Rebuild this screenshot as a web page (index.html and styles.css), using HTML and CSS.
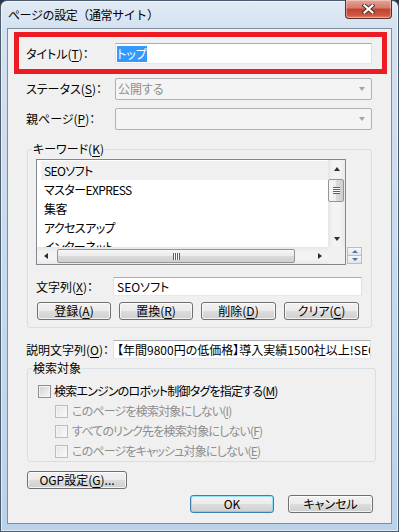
FILE: index.html
```html
<!DOCTYPE html>
<html lang="ja">
<head>
  <meta charset="UTF-8" />
  <meta name="viewport" content="width=device-width, initial-scale=1" />
  <title>ページの設定（通常サイト）</title>
  <link rel="stylesheet" href="styles.css">
</head>
<body>

  <div class="window">
    <div class="titlebar">
      <span class="caption">ページの設定（通常サイト）</span>
      <div class="close-btn" aria-label="閉じる">
        <svg width="13" height="10" viewBox="0 0 13 10">
          <path d="M2.5 1.5 L10.5 8.5 M10.5 1.5 L2.5 8.5" stroke="#4a2f2a" stroke-width="4" stroke-linecap="square" fill="none"/>
          <path d="M2.5 1.5 L10.5 8.5 M10.5 1.5 L2.5 8.5" stroke="#fff" stroke-width="2.2" stroke-linecap="square" fill="none"/>
        </svg>
      </div>
    </div>

    <div class="client">
      <!-- タイトル欄（赤枠） -->
      <div class="highlight">
        <div class="field-row">
          <span class="label label-wide">タイトル(<u>T</u>)：</span>
          <div class="textbox title-box"><span class="selection">トップ</span></div>
        </div>
      </div>

      <div class="field-row indent status-row">
        <span class="label label-wide">ステータス(<u>S</u>)：</span>
        <div class="combo"><span class="combo-text">公開する</span><span class="combo-arrow"></span></div>
      </div>

      <div class="field-row indent parent-row">
        <span class="label label-wide">親ページ(<u>P</u>)：</span>
        <div class="combo"><span class="combo-text"></span><span class="combo-arrow"></span></div>
      </div>

      <!-- キーワード -->
      <fieldset class="group keyword-group">
        <legend>キーワード(<u>K</u>)</legend>
        <div class="list-row">
          <div class="listbox">
            <ul class="list-items">
              <li class="selected">SEOソフト</li>
              <li>マスターEXPRESS</li>
              <li>集客</li>
              <li>アクセスアップ</li>
              <li>インターネット</li>
            </ul>
            <div class="vscroll">
              <div class="sb-btn"><span class="tri tri-up"></span></div>
              <div class="vthumb"><span class="grip grip-h"></span></div>
              <div class="sb-btn sb-end"><span class="tri tri-down"></span></div>
            </div>
            <div class="hscroll">
              <div class="sb-btn"><span class="tri tri-left"></span></div>
              <div class="hthumb"><span class="grip grip-v"></span></div>
              <div class="sb-btn sb-end"><span class="tri tri-right"></span></div>
            </div>
            <div class="sb-corner"></div>
          </div>
          <div class="spinner">
            <div class="spin-btn"><span class="tri tri-up blue"></span></div>
            <div class="spin-btn"><span class="tri tri-down blue"></span></div>
          </div>
        </div>

        <div class="field-row string-row">
          <span class="label label-string">文字列(<u>X</u>)：</span>
          <div class="textbox string-box">SEOソフト</div>
        </div>

        <div class="button-row">
          <button class="btn btn-sm" type="button">登録(<u>A</u>)</button>
          <button class="btn btn-sm" type="button">置換(<u>R</u>)</button>
          <button class="btn btn-md" type="button">削除(<u>D</u>)</button>
          <button class="btn btn-md" type="button">クリア(<u>C</u>)</button>
        </div>
      </fieldset>

      <div class="field-row indent desc-row">
        <span class="label label-desc">説明文字列(<u>O</u>)：</span>
        <div class="textbox desc-box">【年間9800円の低価格】導入実績1500社以上!SEOソフト</div>
      </div>

      <!-- 検索対象 -->
      <fieldset class="group search-group">
        <legend>検索対象</legend>
        <div class="check-row">
          <span class="check"></span>
          <span class="check-text">検索エンジンのロボット制御タグを指定する(<u>M</u>)</span>
        </div>
        <div class="check-row sub">
          <span class="check"></span>
          <span class="check-text">このページを検索対象にしない(<u>I</u>)</span>
        </div>
        <div class="check-row sub">
          <span class="check"></span>
          <span class="check-text">すべてのリンク先を検索対象にしない(<u>F</u>)</span>
        </div>
        <div class="check-row sub">
          <span class="check"></span>
          <span class="check-text">このページをキャッシュ対象にしない(<u>E</u>)</span>
        </div>
      </fieldset>

      <button class="btn btn-ogp" type="button">OGP設定(<u>G</u>)...</button>

      <div class="dialog-buttons">
        <button class="btn btn-ok" type="button">OK</button>
        <button class="btn btn-cancel" type="button">キャンセル</button>
      </div>
    </div>
  </div>

</body>
</html>
```

FILE: styles.css
```css
* {
  box-sizing: border-box;
}

body {
  margin: 0;
  font-family: "Noto Sans CJK JP", "Noto Sans", sans-serif;
  font-size: 12px;
  line-height: 16px;
  font-feature-settings: "palt";
  color: #000;
  background: #2a3645;
}

u {
  text-decoration: underline;
  text-underline-offset: 2px;
}

/* ウィンドウ枠 */
.window {
  width: 399px;
  height: 532px;
  display: flex;
  flex-direction: column;
  padding: 0 6px 7px;
  border: 1px solid #4d5d70;
  border-radius: 7px 7px 0 0;
  background: linear-gradient(180deg, #e2ebf5 0, #d3e1f0 28px, #c5d8ed 60%, #bcd2ea 100%);
  box-shadow: inset 0 0 0 1px rgba(255, 255, 255, 0.55);
}

.titlebar {
  height: 27px;
  flex-shrink: 0;
  display: flex;
  justify-content: space-between;
  align-items: flex-start;
}

.caption {
  padding: 6px 0 0 1px;
  font-feature-settings: normal;
  letter-spacing: -0.4px;
}

.close-btn {
  width: 47px;
  height: 19px;
  margin-top: -1px;
  display: flex;
  align-items: center;
  justify-content: center;
  border: 1px solid #5b2e28;
  border-top: none;
  border-radius: 0 0 4px 4px;
  background: linear-gradient(180deg, #e6a497 0, #d47a69 45%, #c0432f 50%, #cf573f 85%, #e08a6e 100%);
  box-shadow: inset 0 0 0 1px rgba(255, 255, 255, 0.35);
}

.client {
  flex: 1;
  display: flex;
  flex-direction: column;
  align-items: flex-start;
  background: #f0f0f0;
  border: 1px solid #7f8fa1;
}

/* 赤枠 */
.highlight {
  margin: 3px 0 0 6px;
  width: 373px;
  border: 5px solid #ed1c24;
  padding: 6px 10px 5px 7px;
}

.field-row {
  display: flex;
  align-items: center;
}

.label {
  flex-shrink: 0;
  white-space: nowrap;
}

.label-wide { width: 89px; }
.label-string { width: 77px; }
.label-desc { width: 87px; }

.indent { margin-left: 18px; }
.status-row { margin-top: 4px; }
.parent-row { margin-top: 8px; }
.desc-row { margin-top: 12px; }

.textbox {
  height: 21px;
  width: 257px;
  display: flex;
  align-items: center;
  padding-left: 3px;
  white-space: nowrap;
  overflow: hidden;
  background: #fff;
  border: 1px solid;
  border-color: #abadb3 #dbdfe6 #e3e9ef #e2e3ea;
}

.title-box { padding-left: 1px; }

.selection {
  background: #3399ff;
  color: #fff;
}

.string-box {
  width: 249px;
  height: 19px;
}

.desc-box {
  width: 258px;
  height: 19px;
}

.combo {
  width: 257px;
  height: 22px;
  display: flex;
  align-items: center;
  padding: 0 6px 0 2px;
  border: 1px solid #adb2b5;
  border-radius: 2px;
  background: #f4f4f4;
  color: #8d8d8d;
}

.combo-arrow {
  margin-left: auto;
  border-style: solid;
  border-color: #a6a6a6 transparent transparent;
  border-width: 4px 3.5px 0;
}

/* グループ枠 */
.group {
  margin: 0;
  min-width: 0;
  border: 1px solid #d5dfe5;
  border-radius: 3px;
}

.group legend {
  padding: 0 1px;
  line-height: 16px;
}

.keyword-group {
  margin: 11px 0 0 19px;
  width: 345px;
  padding: 2px 8px 7px 8px;
}

.keyword-group legend { margin-left: -4px; }

.list-row {
  display: flex;
  align-items: flex-end;
  gap: 1px;
}

.listbox {
  width: 310px;
  height: 106px;
  border: 1px solid #828790;
  background: #fff;
  display: grid;
  grid-template-columns: 1fr 17px;
  grid-template-rows: 1fr 17px;
}

.list-items {
  margin: 0;
  padding: 1px 0 0 4px;
  list-style: none;
  overflow: hidden;
}

.list-items li {
  height: 19px;
  line-height: 19px;
  padding-left: 3px;
  white-space: nowrap;
  letter-spacing: -0.6px;
}

.list-items li.selected {
  background: #f0f0f0;
}

.vscroll {
  display: flex;
  flex-direction: column;
  background: linear-gradient(90deg, #e6e6e6, #f3f3f3 30%, #f3f3f3 70%, #e9e9e9);
}

.hscroll {
  display: flex;
  background: linear-gradient(180deg, #e6e6e6, #f3f3f3 30%, #f3f3f3 70%, #e9e9e9);
}

.sb-corner {
  background: #f0f0f0;
}

.sb-btn {
  width: 17px;
  height: 17px;
  flex-shrink: 0;
  display: flex;
  align-items: center;
  justify-content: center;
}

.sb-end { margin: auto 0 0 0; }
.hscroll .sb-end { margin: 0 0 0 auto; }

.vthumb {
  height: 23px;
  margin: 2px 1px 0 0;
  display: flex;
  align-items: center;
  justify-content: center;
  border: 1px solid #959595;
  border-radius: 2px;
  background: linear-gradient(90deg, #f6f6f6, #ebebeb 50%, #dbdbdb 50%, #cfcfcf);
}

.hthumb {
  width: 238px;
  height: 14px;
  margin: 2px 0 0 3px;
  display: flex;
  align-items: center;
  justify-content: center;
  border: 1px solid #959595;
  border-radius: 2px;
  background: linear-gradient(180deg, #f6f6f6, #ebebeb 50%, #dbdbdb 50%, #cfcfcf);
}

.grip-h {
  width: 7px;
  height: 7px;
  background: repeating-linear-gradient(180deg, #5f5f5f 0 1px, #fafafa 1px 2px);
}

.grip-v {
  width: 7px;
  height: 7px;
  background: repeating-linear-gradient(90deg, #5f5f5f 0 1px, #fafafa 1px 2px);
}

.tri {
  width: 0;
  height: 0;
  border-style: solid;
  border-color: transparent;
}

.tri-up { border-width: 0 3.5px 4px; border-bottom-color: #2e2e2e; }
.tri-down { border-width: 4px 3.5px 0; border-top-color: #2e2e2e; }
.tri-left { border-width: 3.5px 4px 3.5px 0; border-right-color: #2e2e2e; }
.tri-right { border-width: 3.5px 0 3.5px 4px; border-left-color: #2e2e2e; }
.tri-up.blue { border-bottom-color: #4d6fb8; border-width: 0 3.5px 3px; }
.tri-down.blue { border-top-color: #4d6fb8; border-width: 3px 3.5px 0; }

.spinner {
  width: 15px;
  height: 17px;
  margin-bottom: 1px;
  display: flex;
  flex-direction: column;
}

.spin-btn {
  flex: 1;
  display: flex;
  align-items: center;
  justify-content: center;
  border: 1px solid #bdbdbd;
  background: linear-gradient(180deg, #f8f8f8, #e4e4e4);
}

.spin-btn + .spin-btn { border-top: none; }

.string-row { margin-top: 12px; }

/* ボタン */
.btn {
  height: 18px;
  padding: 0;
  display: flex;
  align-items: center;
  justify-content: center;
  font: inherit;
  font-feature-settings: "palt";
  color: #000;
  border: 1px solid #707070;
  border-radius: 3px;
  background: linear-gradient(180deg, #f2f2f2 0, #ebebeb 50%, #dddddd 50%, #cfcfcf 100%);
  box-shadow: inset 0 0 0 1px rgba(255, 255, 255, 0.75);
}

.button-row {
  display: flex;
  gap: 8px;
  margin: 6px 0 0 1px;
}

.btn-sm { width: 74px; }
.btn-md { width: 75px; }

.search-group {
  margin: 1px 0 0 19px;
  width: 349px;
  padding: 5px 8px 0 10px;
}

.search-group legend { margin-left: -6px; }

.check-row {
  height: 20px;
  display: flex;
  align-items: center;
  gap: 3px;
  white-space: nowrap;
}

.check-text {
  letter-spacing: -0.8px;
}

.check {
  width: 13px;
  height: 13px;
  flex-shrink: 0;
  border: 1px solid #8e8f8f;
  background: linear-gradient(135deg, #cdd1d6, #f7f7f7);
  box-shadow: inset 0 0 0 1px #f4f4f4;
}

.check-row.sub {
  padding-left: 17px;
  gap: 4px;
  color: #8d8d8d;
}

.check-row.sub .check {
  border-color: #bcbcbc;
  background: linear-gradient(135deg, #e4e4e4, #fbfbfb);
}

.btn-ogp {
  width: 100px;
  margin: 9px 0 0 19px;
}

.dialog-buttons {
  align-self: stretch;
  display: flex;
  justify-content: flex-end;
  gap: 14px;
  margin-top: 6px;
  padding-right: 18px;
}

.btn-ok {
  width: 84px;
  border-color: #3c7fb1;
  box-shadow: inset 0 0 0 1px rgba(72, 211, 251, 0.55);
}

.btn-cancel { width: 85px; }
```
